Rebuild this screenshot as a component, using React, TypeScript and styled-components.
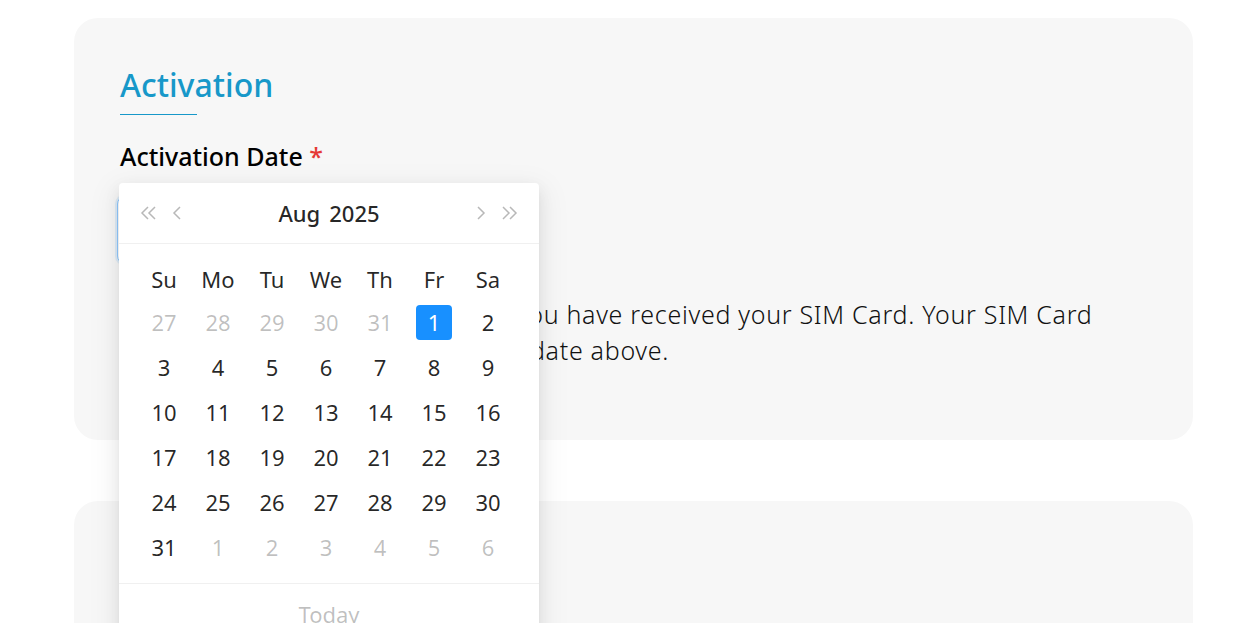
import styled, { createGlobalStyle } from "styled-components";

const GlobalStyle = createGlobalStyle`
  html, body {
    margin: 0;
    padding: 0;
    background: #ffffff;
    font-family: "Noto Sans", "Open Sans", sans-serif;
    overflow: hidden;
  }
`;

const weekDays = ["Su", "Mo", "Tu", "We", "Th", "Fr", "Sa"];

type Day = { n: number; out?: boolean; selected?: boolean };

const buildWeeks = (): Day[][] => {
  const days: Day[] = [];
  for (let n = 27; n <= 31; n++) days.push({ n, out: true });
  for (let n = 1; n <= 31; n++) days.push({ n, selected: n === 1 });
  for (let n = 1; n <= 6; n++) days.push({ n, out: true });
  const weeks: Day[][] = [];
  for (let i = 0; i < days.length; i += 7) weeks.push(days.slice(i, i + 7));
  return weeks;
};

const DoubleLeft = () => (
  <svg width="20" height="16" viewBox="0 0 20 16" fill="none">
    <path d="M9 2L3 8l6 6M16 2l-6 6 6 6" stroke="currentColor" strokeWidth="1.5" />
  </svg>
);
const SingleLeft = () => (
  <svg width="12" height="16" viewBox="0 0 12 16" fill="none">
    <path d="M9 2L3 8l6 6" stroke="currentColor" strokeWidth="1.5" />
  </svg>
);
const SingleRight = () => (
  <svg width="12" height="16" viewBox="0 0 12 16" fill="none">
    <path d="M3 2l6 6-6 6" stroke="currentColor" strokeWidth="1.5" />
  </svg>
);
const DoubleRight = () => (
  <svg width="20" height="16" viewBox="0 0 20 16" fill="none">
    <path d="M4 2l6 6-6 6M11 2l6 6-6 6" stroke="currentColor" strokeWidth="1.5" />
  </svg>
);

export default function App() {
  const weeks = buildWeeks();
  return (
    <Page>
      <GlobalStyle />
      <Card>
        <Title>Activation</Title>
        <TitleLine />
        <Label>
          Activation Date <Req>*</Req>
        </Label>
        <Field>
          <Input />
          <Popup>
            <PopupHeader>
              <NavGroup>
                <NavBtn>
                  <DoubleLeft />
                </NavBtn>
                <NavBtn>
                  <SingleLeft />
                </NavBtn>
              </NavGroup>
              <MonthYear>
                <span>Aug</span>
                <span>2025</span>
              </MonthYear>
              <NavGroup>
                <NavBtn>
                  <SingleRight />
                </NavBtn>
                <NavBtn>
                  <DoubleRight />
                </NavBtn>
              </NavGroup>
            </PopupHeader>
            <PopupBody>
              <WeekRow>
                {weekDays.map((d) => (
                  <WeekDay key={d}>{d}</WeekDay>
                ))}
              </WeekRow>
              {weeks.map((w, i) => (
                <DateRow key={i}>
                  {w.map((d, j) => (
                    <DateCell key={j} $out={d.out}>
                      <DateInner $selected={d.selected}>{d.n}</DateInner>
                    </DateCell>
                  ))}
                </DateRow>
              ))}
            </PopupBody>
            <PopupFooter>Today</PopupFooter>
          </Popup>
        </Field>
        <Description>
          Please select this date only once you have received your SIM Card. Your SIM Card
          <br />
          will be activated starting from the date above.
        </Description>
      </Card>
      <Card $short />
    </Page>
  );
}

const Page = styled.div`
  display: flex;
  flex-direction: column;
  gap: 61px;
  padding: 18px 48px 0 74px;
`;

const Card = styled.div<{ $short?: boolean }>`
  background: #f7f7f7;
  border-radius: 24px;
  padding: 46px 46px 0 46px;
  height: ${(p) => (p.$short ? "200px" : "422px")};
  box-sizing: border-box;
  display: flex;
  flex-direction: column;
  align-items: flex-start;
`;

const Title = styled.h2`
  margin: 0;
  font-size: 32px;
  font-weight: 500;
  line-height: 42px;
  color: #1798c9;
`;

const TitleLine = styled.div`
  width: 77px;
  height: 1px;
  background: #1798c9;
  margin-top: 8px;
`;

const Label = styled.div`
  margin-top: 24px;
  font-size: 25px;
  font-weight: 500;
  line-height: 34px;
  color: #000000;
`;

const Req = styled.span`
  color: #e53935;
`;

const Field = styled.div`
  position: relative;
  margin-top: 23px;
`;

const Input = styled.div`
  height: 68px;
  width: 400px;
  margin-left: -3px;
  box-sizing: border-box;
  background: #ffffff;
  border: 1px solid #91caff;
  border-radius: 8px;
  box-shadow: 0 0 0 2px rgba(5, 145, 255, 0.1);
`;

const Popup = styled.div`
  position: absolute;
  top: -13px;
  left: -1px;
  width: 420px;
  background: #ffffff;
  border-radius: 4px;
  box-shadow: 0 6px 16px 0 rgba(0, 0, 0, 0.08), 0 3px 6px -4px rgba(0, 0, 0, 0.12),
    0 9px 28px 8px rgba(0, 0, 0, 0.05);
  z-index: 10;
`;

const PopupHeader = styled.div`
  height: 60px;
  display: flex;
  align-items: center;
  justify-content: space-between;
  padding: 0 20px 0 20px;
  border-bottom: 1px solid #f0f0f0;
`;

const NavGroup = styled.div`
  display: flex;
  align-items: center;
  gap: 12px;
  color: #b8b8b8;
`;

const NavBtn = styled.span`
  display: flex;
  align-items: center;
`;

const MonthYear = styled.div`
  display: flex;
  gap: 9px;
  font-size: 22px;
  font-weight: 500;
  color: rgba(0, 0, 0, 0.85);
`;

const PopupBody = styled.div`
  padding: 14px 24px 13px 18px;
  border-bottom: 1px solid #f0f0f0;
`;

const WeekRow = styled.div`
  display: grid;
  grid-template-columns: repeat(7, 54px);
  height: 42px;
  align-items: center;
`;

const WeekDay = styled.div`
  text-align: center;
  font-size: 22px;
  color: rgba(0, 0, 0, 0.85);
`;

const DateRow = styled.div`
  display: grid;
  grid-template-columns: repeat(7, 54px);
  height: 45px;
  align-items: center;
`;

const DateCell = styled.div<{ $out?: boolean }>`
  display: flex;
  justify-content: center;
  font-size: 22px;
  color: ${(p) => (p.$out ? "rgba(0, 0, 0, 0.25)" : "rgba(0, 0, 0, 0.85)")};
`;

const DateInner = styled.div<{ $selected?: boolean }>`
  min-width: 36px;
  height: 35px;
  line-height: 35px;
  text-align: center;
  border-radius: 4px;
  background: ${(p) => (p.$selected ? "#1890ff" : "transparent")};
  color: ${(p) => (p.$selected ? "#ffffff" : "inherit")};
`;

const PopupFooter = styled.div`
  height: 60px;
  display: flex;
  align-items: center;
  justify-content: center;
  font-size: 22px;
  color: rgba(0, 0, 0, 0.25);
`;

const Description = styled.p`
  margin: 32px 0 0 0;
  font-size: 25px;
  font-weight: 300;
  line-height: 36px;
  letter-spacing: 0.7px;
  color: #111111;
  white-space: nowrap;
`;
